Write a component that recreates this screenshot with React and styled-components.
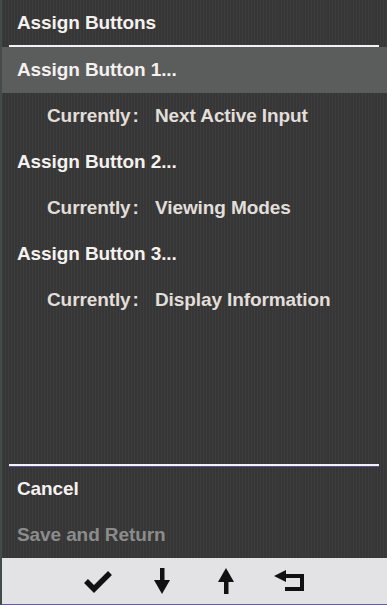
import React from "react";
import styled, { createGlobalStyle } from "styled-components";

const Global = createGlobalStyle`
  html, body { margin: 0; padding: 0; background: #383838; }
  * { box-sizing: border-box; }
`;

const Screen = styled.div`
  width: 387px;
  height: 605px;
  display: flex;
  flex-direction: column;
  background-color: #383838;
  background-image: repeating-linear-gradient(
    90deg,
    rgba(255, 255, 255, 0.025) 0px,
    rgba(255, 255, 255, 0.025) 1px,
    rgba(0, 0, 0, 0.03) 1px,
    rgba(0, 0, 0, 0.03) 3px
  );
  border-left: 2px solid #454a4a;
  font-family: "Liberation Sans", Arial, sans-serif;
  font-weight: 700;
  font-size: 19px;
  letter-spacing: -0.1px;
  color: #f5f1ef;
  overflow: hidden;
`;

const Header = styled.div`
  height: 45px;
  display: flex;
  align-items: center;
  padding-left: 15px;
  padding-top: 1px;
`;

const Rule = styled.div`
  height: 2px;
  margin: 0 8px 0 7px;
  background: #f4f2f6;
  box-shadow: 0 1px 0 rgba(110, 100, 230, 0.55);
`;

const List = styled.div`
  display: flex;
  flex-direction: column;
`;

const Row = styled.div`
  height: 46px;
  display: flex;
  align-items: center;
  padding-left: ${(p) => (p.$indent ? 45 : 15)}px;
  background: ${(p) => (p.$selected ? "#5b5d5d" : "transparent")};
  color: ${(p) => (p.$dim ? "#8c8c8c" : p.$sub ? "#e2deda" : "#f5f1ef")};
`;

const Label = styled.span`
  width: 108px;
  flex: none;
`;

const Colon = styled.span`
  margin-left: 2px;
`;

const Spacer = styled.div`
  flex: 1;
`;

const Bar = styled.div`
  height: 47px;
  margin-left: -2px;
  background: #e3e3e6;
  border-bottom: 1px solid #5a5ab8;
  display: flex;
  justify-content: center;
  align-items: center;
`;

const IconCell = styled.div`
  width: 64px;
  display: flex;
  justify-content: center;
  align-items: center;
`;

const Check = () => (
  <svg width="30" height="24" viewBox="0 0 30 24">
    <polyline points="3,12 11,20 27,4" fill="none" stroke="#111" strokeWidth="5.5" strokeLinejoin="miter" />
  </svg>
);

const Down = () => (
  <svg width="16" height="26" viewBox="0 0 16 26">
    <rect x="6" y="0" width="4.5" height="15" fill="#111" />
    <polygon points="0,12 16,12 8,26" fill="#111" />
  </svg>
);

const Up = () => (
  <svg width="16" height="26" viewBox="0 0 16 26">
    <polygon points="8,0 16,14 0,14" fill="#111" />
    <rect x="6" y="11" width="4.5" height="15" fill="#111" />
  </svg>
);

const Return = () => (
  <svg width="32" height="22" viewBox="0 0 32 22">
    <polygon points="0,6 12,0 12,12" fill="#111" />
    <path d="M10 6 H28 V19 H11" fill="none" stroke="#111" strokeWidth="4" />
  </svg>
);

const items = [
  { name: "Assign Button 1...", current: "Next Active Input" },
  { name: "Assign Button 2...", current: "Viewing Modes" },
  { name: "Assign Button 3...", current: "Display Information" },
];

export default function App() {
  return (
    <>
      <Global />
      <Screen>
        <Header>Assign Buttons</Header>
        <Rule />
        <List>
          {items.map((it, i) => (
            <React.Fragment key={it.name}>
              <Row $selected={i === 0}>{it.name}</Row>
              <Row $indent $sub>
                <Label>
                  Currently<Colon>:</Colon>
                </Label>
                {it.current}
              </Row>
            </React.Fragment>
          ))}
        </List>
        <Spacer />
        <Rule />
        <List>
          <Row>Cancel</Row>
          <Row $dim>Save and Return</Row>
        </List>
        <Bar>
          <IconCell><Check /></IconCell>
          <IconCell><Down /></IconCell>
          <IconCell><Up /></IconCell>
          <IconCell><Return /></IconCell>
        </Bar>
      </Screen>
    </>
  );
}
